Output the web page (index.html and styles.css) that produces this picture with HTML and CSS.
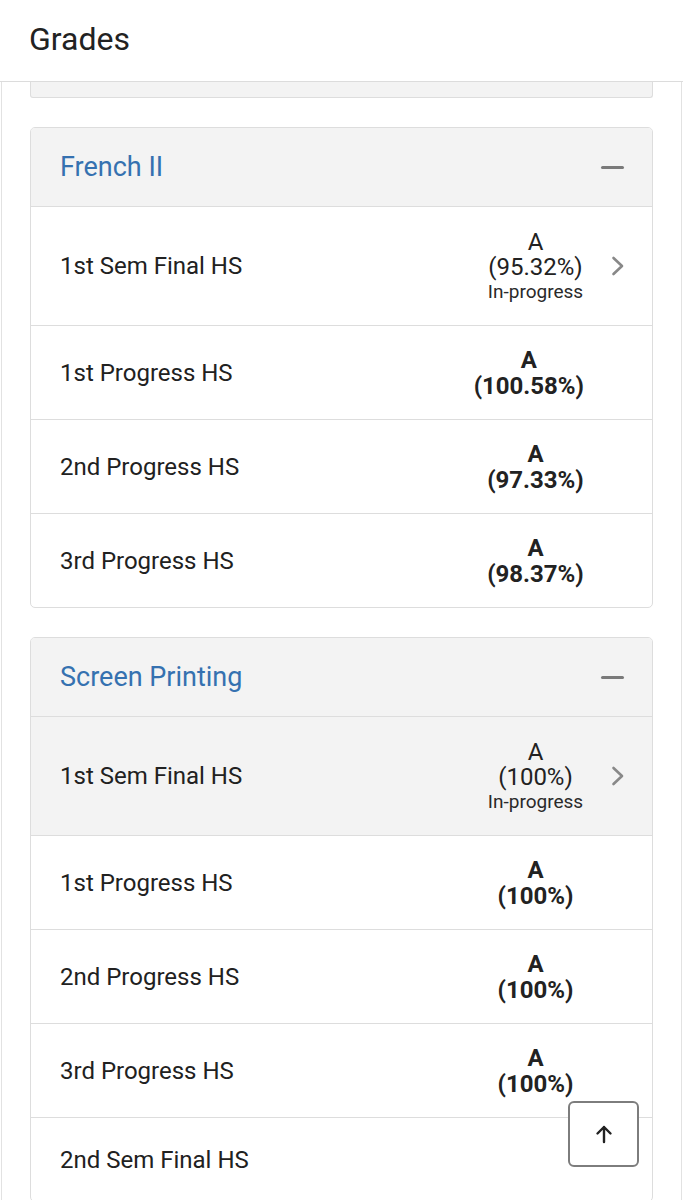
FILE: index.html
```html
<!DOCTYPE html>
<html lang="en">
<head>
<meta charset="utf-8">
<title>Grades</title>
<link rel="stylesheet" href="styles.css">
</head>
<body>
<header class="topbar">
  <h1 class="page-title">Grades</h1>
</header>
<main class="content">
  <div class="card-tail"></div>

  <section class="card">
    <div class="card-head">
      <h2 class="course">French II</h2>
      <span class="minus"></span>
    </div>
    <div class="row detail">
      <span class="label">1st Sem Final HS</span>
      <div class="grade">
        <span class="g-line">A</span>
        <span class="g-line">(95.32%)</span>
        <span class="status">In-progress</span>
      </div>
      <span class="chev"><svg width="14" height="20" viewBox="0 0 14 20"><polyline points="2.5,2 11,10 2.5,18" fill="none" stroke="#888" stroke-width="2.6" stroke-linecap="round" stroke-linejoin="round"/></svg></span>
    </div>
    <div class="row">
      <span class="label">1st Progress HS</span>
      <div class="grade bold"><span class="g-line">A</span><span class="g-line">(100.58%)</span></div>
      <span class="chev"></span>
    </div>
    <div class="row">
      <span class="label">2nd Progress HS</span>
      <div class="grade bold"><span class="g-line">A</span><span class="g-line">(97.33%)</span></div>
      <span class="chev"></span>
    </div>
    <div class="row">
      <span class="label">3rd Progress HS</span>
      <div class="grade bold"><span class="g-line">A</span><span class="g-line">(98.37%)</span></div>
      <span class="chev"></span>
    </div>
  </section>

  <section class="card">
    <div class="card-head">
      <h2 class="course">Screen Printing</h2>
      <span class="minus"></span>
    </div>
    <div class="row detail active">
      <span class="label">1st Sem Final HS</span>
      <div class="grade">
        <span class="g-line">A</span>
        <span class="g-line">(100%)</span>
        <span class="status">In-progress</span>
      </div>
      <span class="chev"><svg width="14" height="20" viewBox="0 0 14 20"><polyline points="2.5,2 11,10 2.5,18" fill="none" stroke="#888" stroke-width="2.6" stroke-linecap="round" stroke-linejoin="round"/></svg></span>
    </div>
    <div class="row">
      <span class="label">1st Progress HS</span>
      <div class="grade bold"><span class="g-line">A</span><span class="g-line">(100%)</span></div>
      <span class="chev"></span>
    </div>
    <div class="row">
      <span class="label">2nd Progress HS</span>
      <div class="grade bold"><span class="g-line">A</span><span class="g-line">(100%)</span></div>
      <span class="chev"></span>
    </div>
    <div class="row">
      <span class="label">3rd Progress HS</span>
      <div class="grade bold"><span class="g-line">A</span><span class="g-line">(100%)</span></div>
      <span class="chev"></span>
    </div>
    <div class="row empty">
      <span class="label">2nd Sem Final HS</span>
      <div class="grade"></div>
      <span class="chev"></span>
    </div>
  </section>
</main>
<button class="to-top" type="button" aria-label="Back to top">
  <svg width="20" height="20" viewBox="0 0 20 20"><path d="M10 18V3M3.5 9.5L10 3l6.5 6.5" fill="none" stroke="#222" stroke-width="2.4" stroke-linecap="round" stroke-linejoin="round"/></svg>
</button>
</body>
</html>
```

FILE: styles.css
```css
html, body {
  margin: 0;
  padding: 0;
  background: #ffffff;
  overflow-x: hidden;
}

body {
  font-family: Roboto, "Liberation Sans", Arial, sans-serif;
  color: #212121;
}

.topbar {
  height: 81px;
  border-bottom: 1px solid #dcdcdc;
  display: flex;
  align-items: center;
  padding: 0 0 0 29px;
  background: #fff;
}

.page-title {
  margin: -3px 0 0 0;
  font-size: 32px;
  font-weight: 400;
  color: #222;
}

.content {
  margin: 0 1px;
  border-left: 1px solid #e2e2e2;
  border-right: 1px solid #e2e2e2;
  padding: 0 28px 40px;
  min-height: 1200px;
}

.card-tail {
  height: 15px;
  background: #f3f3f3;
  border: 1px solid #dddddd;
  border-top: none;
  border-radius: 0 0 3px 3px;
  margin-bottom: 29px;
}

.card {
  border: 1px solid #dddddd;
  border-radius: 5px;
  overflow: hidden;
  margin-bottom: 29px;
  background: #fff;
}

.card-head {
  height: 78px;
  background: #f3f3f3;
  display: flex;
  align-items: center;
  justify-content: space-between;
  padding: 0 28px 0 29px;
}

.course {
  margin: 0;
  font-size: 27px;
  font-weight: 400;
  color: #3571b0;
}

.minus {
  display: block;
  width: 23px;
  height: 3px;
  border-radius: 2px;
  background: #7a7a7a;
}

.row {
  display: grid;
  grid-template-columns: 1fr auto 40px;
  align-items: center;
  min-height: 94px;
  box-sizing: border-box;
  border-top: 1px solid #dddddd;
  padding: 0 28px 0 29px;
}

.row.detail {
  min-height: 119px;
}

.row.empty {
  min-height: 84px;
}

.row.active {
  background: #f3f3f3;
}

.label {
  font-size: 24px;
  color: #212121;
}

.grade {
  display: flex;
  flex-direction: column;
  align-items: center;
  text-align: center;
  min-width: 97px;
  font-size: 24px;
  color: #222;
}

.g-line {
  line-height: 25px;
}

.grade.bold {
  font-weight: 700;
  color: #222;
}

.grade.bold .g-line {
  line-height: 26px;
}

.status {
  font-size: 19px;
  line-height: 23px;
  color: #2a2a2a;
}

.chev {
  display: flex;
  justify-content: flex-end;
  align-items: center;
}

.chev svg {
  display: block;
  margin-right: -1px;
}

.to-top {
  position: fixed;
  right: 44px;
  bottom: 33px;
  width: 71px;
  height: 66px;
  box-sizing: border-box;
  background: #ffffff;
  border: 2px solid #7d7d7d;
  border-radius: 6px;
  display: flex;
  align-items: center;
  justify-content: center;
  padding: 0;
}

.to-top svg {
  display: block;
}
```
